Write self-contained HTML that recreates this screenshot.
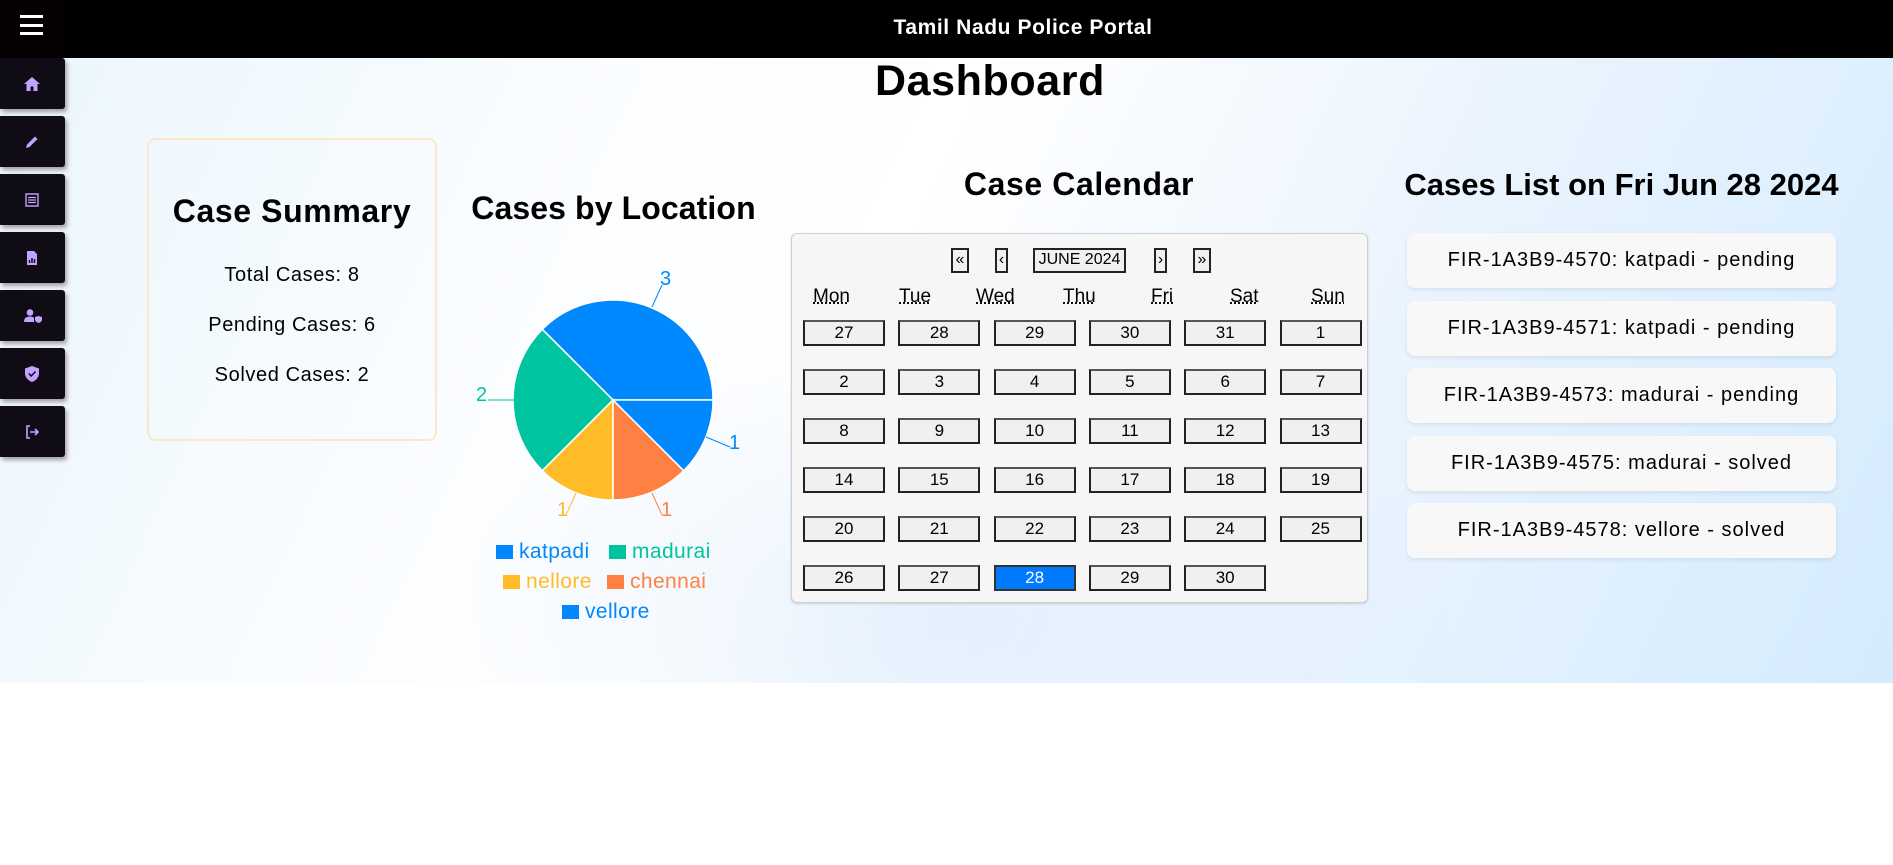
<!DOCTYPE html>
<html><head><meta charset="utf-8"><style>
*{box-sizing:border-box;margin:0;padding:0}
body{width:1893px;height:865px;overflow:hidden;background:#fff;font-family:"Liberation Sans",sans-serif;position:relative}
.bg{position:absolute;left:0;top:58px;width:1893px;height:625px;background:linear-gradient(115deg,#eaf6fd 0%,#fbfdff 30%,#ffffff 45%,#eaf4fe 70%,#d4ebfd 100%)}
.bg2{position:absolute;left:0;top:58px;width:1893px;height:625px;background:radial-gradient(ellipse 500px 300px at 950px 560px,rgba(210,230,252,.5),rgba(255,255,255,0))}
.hdr{position:absolute;left:0;top:0;width:1893px;height:58px;background:#000}
.hdr span{position:absolute;left:823px;width:400px;text-align:center;color:#fff;font-weight:bold;font-size:21px;line-height:56px;letter-spacing:.6px}
.ham{position:absolute;left:0;top:0;width:63px;height:57px;background:#050003}
.ham i{position:absolute;left:20px;width:23px;height:3px;background:#fff}
.sb{position:absolute;left:0;width:65px;height:51px;background:#100c16;border-radius:0 3px 3px 0;box-shadow:2px 3px 4px rgba(80,50,50,.45)}
.sb svg{position:absolute;left:22px;top:16px}
.t{position:absolute;text-align:center;color:#000;white-space:nowrap}
.h{font-size:32px;font-weight:bold;letter-spacing:.6px}
.s{font-size:20px;letter-spacing:.6px}
.box{position:absolute;left:147px;top:138px;width:290px;height:303px;border:2px solid #fde8c6;border-radius:9px}
.cal{position:absolute;left:791px;top:233px;width:577px;height:370px;background:#f6f6f6;border:1px solid #cfcfcf;border-radius:6px;box-shadow:0 1px 2px rgba(0,0,0,.15)}
.nb{position:absolute;top:14px;height:25px;border:2px solid #222;background:#f0f0f0;font-size:16px;line-height:20px;text-align:center;color:#000;white-space:nowrap}
.wd{position:absolute;top:52px;font-size:19px;text-decoration:underline dotted;color:#000}
.c{position:absolute;width:82px;height:26px;border:2px solid #222;border-top-color:#555;background:#f0f0f0;font-size:17px;line-height:22px;text-align:center;color:#000}
.c.sel{background:#007bff;color:#fff;border-color:#333}
.it{position:absolute;left:1407px;width:429px;height:55px;background:#f8f8f8;border-radius:8px;box-shadow:0 2px 4px rgba(0,0,0,.08);font-size:20px;letter-spacing:1px;text-align:center;line-height:55px;color:#000;white-space:nowrap}
.lg{position:absolute;font-size:21px;line-height:24px;letter-spacing:.4px}
.lg b{display:inline-block;width:17px;height:14px;margin-right:6px;vertical-align:-1px}
</style></head><body>
<div class="bg"></div><div class="bg2"></div>
<div class="hdr"><span>Tamil Nadu Police Portal</span></div>
<div class="ham"><i style="top:15px"></i><i style="top:24px"></i><i style="top:32px"></i></div>

<div class="sb" style="top:58px"><svg width="20" height="20" viewBox="0 0 20 20"><path d="M10 3 L2 10 H4.5 V17 H8.5 V12.5 H11.5 V17 H15.5 V10 H18 Z" fill="#c3a3ff"/></svg></div>
<div class="sb" style="top:116px"><svg width="20" height="20" viewBox="0 0 20 20"><path d="M4 16 L5 12.5 L13 4.5 L15.5 7 L7.5 15 Z" fill="#c3a3ff"/></svg></div>
<div class="sb" style="top:174px"><svg width="20" height="20" viewBox="0 0 20 20"><rect x="4" y="4" width="12" height="12" fill="none" stroke="#c3a3ff" stroke-width="1.4"/><path d="M6 7.5H14M6 10H14M6 12.5H14" stroke="#c3a3ff" stroke-width="1.2"/></svg></div>
<div class="sb" style="top:232px"><svg width="20" height="20" viewBox="0 0 20 20"><path d="M5 3 H12 L15 6 V17 H5 Z" fill="#c3a3ff"/><path d="M7.5 15V12M10 15V10M12.5 15V11" stroke="#100c16" stroke-width="1.5"/></svg></div>
<div class="sb" style="top:290px"><svg width="22" height="20" viewBox="0 0 22 20"><circle cx="8" cy="6.5" r="3.3" fill="#c3a3ff"/><path d="M2 16 Q2 10.5 8 10.5 Q11 10.5 12 12 V16 Z" fill="#c3a3ff"/><path d="M13 11 L16.5 10 L20 11 V13.5 Q20 16 16.5 17 Q13 16 13 13.5 Z" fill="#c3a3ff"/></svg></div>
<div class="sb" style="top:348px"><svg width="20" height="20" viewBox="0 0 20 20"><path d="M10 2 L17 4.5 V9 Q17 15 10 18 Q3 15 3 9 V4.5 Z" fill="#c3a3ff"/><path d="M6.8 9.5 L9.2 12 L13.5 7.5" stroke="#100c16" stroke-width="1.6" fill="none"/></svg></div>
<div class="sb" style="top:406px"><svg width="20" height="20" viewBox="0 0 20 20"><path d="M8 4 H5 V16 H8" stroke="#c3a3ff" stroke-width="1.6" fill="none"/><path d="M8 10 H16 M13 7 L16 10 L13 13" stroke="#c3a3ff" stroke-width="1.6" fill="none"/></svg></div>

<div class="t" style="left:0;width:1980px;top:57px;font-size:43px;font-weight:bold;letter-spacing:.6px">Dashboard</div>

<div class="box"></div>
<div class="t h" style="left:147px;width:290px;top:193px">Case Summary</div>
<div class="t s" style="left:147px;width:290px;top:264px">Total Cases: 8</div>
<div class="t s" style="left:147px;width:290px;top:314px">Pending Cases: 6</div>
<div class="t s" style="left:147px;width:290px;top:364px">Solved Cases: 2</div>

<div class="t h" style="left:460px;width:307px;top:190px;letter-spacing:.1px">Cases by Location</div>
<svg style="position:absolute;left:0;top:0" width="800" height="560">
<g stroke="#fff" stroke-width="1.5">
<path d="M613 400 L713 400 A100 100 0 0 0 542.3 329.3 Z" fill="#0088FE"/>
<path d="M613 400 L542.3 329.3 A100 100 0 0 0 542.3 470.7 Z" fill="#00C49F"/>
<path d="M613 400 L542.3 470.7 A100 100 0 0 0 613 500 Z" fill="#FFBB28"/>
<path d="M613 400 L613 500 A100 100 0 0 0 683.7 470.7 Z" fill="#FF8042"/>
<path d="M613 400 L683.7 470.7 A100 100 0 0 0 713 400 Z" fill="#0088FE"/>
</g>
<path d="M652 307 L662 285" stroke="#0088FE"/><text x="660" y="285" fill="#0088FE" font-size="20" font-family="Liberation Sans">3</text>
<path d="M514 400 L488 400" stroke="#00C49F"/><text x="476" y="401" fill="#00C49F" font-size="20" font-family="Liberation Sans">2</text>
<path d="M706 437 L730 447" stroke="#0088FE"/><text x="729" y="449" fill="#0088FE" font-size="20" font-family="Liberation Sans">1</text>
<path d="M576 493 L566 515" stroke="#FFBB28"/><text x="557" y="516" fill="#FFBB28" font-size="20" font-family="Liberation Sans">1</text>
<path d="M652 493 L662 515" stroke="#FF8042"/><text x="661" y="516" fill="#FF8042" font-size="20" font-family="Liberation Sans">1</text>
</svg>
<div class="lg" style="left:496px;top:540px;color:#0088FE"><b style="background:#0088FE"></b>katpadi</div>
<div class="lg" style="left:609px;top:540px;color:#00C49F"><b style="background:#00C49F"></b>madurai</div>
<div class="lg" style="left:503px;top:570px;color:#FFBB28"><b style="background:#FFBB28"></b>nellore</div>
<div class="lg" style="left:607px;top:570px;color:#FF8042"><b style="background:#FF8042"></b>chennai</div>
<div class="lg" style="left:562px;top:600px;color:#0088FE"><b style="background:#0088FE"></b>vellore</div>

<div class="t h" style="left:790px;width:578px;top:166px">Case Calendar</div>
<div class="cal">
<div class="nb" style="left:159px;width:18px">«</div>
<div class="nb" style="left:203px;width:13px">‹</div>
<div class="nb" style="left:241px;width:93px">JUNE 2024</div>
<div class="nb" style="left:362px;width:13px">›</div>
<div class="nb" style="left:401px;width:18px">»</div>
<div class="wd" style="left:21px">Mon</div><div class="wd" style="left:107px">Tue</div><div class="wd" style="left:184px">Wed</div><div class="wd" style="left:271px">Thu</div><div class="wd" style="left:359px">Fri</div><div class="wd" style="left:438px">Sat</div><div class="wd" style="left:519px">Sun</div>
</div>
<div id="cells"></div>
<script>
var d=[27,28,29,30,31,1,2,3,4,5,6,7,8,9,10,11,12,13,14,15,16,17,18,19,20,21,22,23,24,25,26,27,28,29,30],h='';
for(var i=0;i<d.length;i++){var r=Math.floor(i/6),c=i%6;h+='<div class="c'+(i==32?' sel':'')+'" style="left:'+(803+c*95.3)+'px;top:'+(320+r*49)+'px">'+d[i]+'</div>';}
document.getElementById('cells').innerHTML=h;
</script>

<div class="t h" style="left:1380px;width:483px;top:167px;font-size:31px;letter-spacing:0">Cases List on Fri Jun 28 2024</div>
<div class="it" style="top:233px">FIR-1A3B9-4570: katpadi - pending</div>
<div class="it" style="top:301px">FIR-1A3B9-4571: katpadi - pending</div>
<div class="it" style="top:368px">FIR-1A3B9-4573: madurai - pending</div>
<div class="it" style="top:436px">FIR-1A3B9-4575: madurai - solved</div>
<div class="it" style="top:503px">FIR-1A3B9-4578: vellore - solved</div>
</body></html>
